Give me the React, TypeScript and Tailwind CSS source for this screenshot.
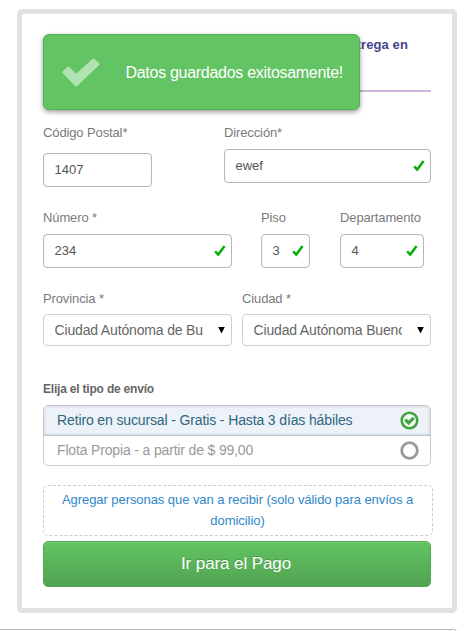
import type { ReactNode } from "react";

function Label({ children, className = "" }: { children: ReactNode; className?: string }) {
  return (
    <div className={`h-4 whitespace-nowrap text-[13px] leading-4 tracking-[-0.12px] text-[#7a7a7e] ${className}`}>{children}</div>
  );
}

function Tick() {
  return (
    <svg width="12" height="12" viewBox="0 0 12 12" className="shrink-0">
      <path d="M1.2 6.4 L4.2 9.6 L10.6 1" fill="none" stroke="#0aab0a" strokeWidth="2.5" />
    </svg>
  );
}

function Field({ value, valid, className }: { value: string; valid?: boolean; className: string }) {
  return (
    <div className={`flex items-center justify-between rounded-[4px] border border-[#b8b8b8] bg-white pr-[5px] pl-[10.5px] shadow-[inset_0_0_1px_#ccc] ${className}`}>
      <span className="text-[13px] leading-4 text-[#555]">{value}</span>
      {valid && <Tick />}
    </div>
  );
}

function Select({ value }: { value: string }) {
  return (
    <div className="flex h-8 w-[189px] items-center justify-between rounded-[4px] border border-[#cfcfcf] bg-white pr-[6px] pl-[10.5px]">
      <span className="w-[148px] overflow-hidden text-[14px] leading-5 tracking-[-0.16px] whitespace-nowrap text-[#666]">{value}</span>
      <svg width="7" height="7" viewBox="0 0 7 7">
        <path d="M0.2 0 H6.8 L3.5 6.5 Z" fill="#000" />
      </svg>
    </div>
  );
}

export default function App() {
  return (
    <div className="h-[631px] w-[475px] overflow-hidden bg-white pt-[9px] font-['Liberation_Sans',Arial,sans-serif]">
      <main className="relative ml-[17px] h-[604px] w-[440px] rounded-[5px] border-[5px] border-[#e0e1e3] px-[21px]">
        <header className="mt-[21px] flex h-[57px] justify-end border-b-2 border-[#cdb4d8] pr-[23px] text-[13px] leading-[19px] font-bold tracking-[0.1px] text-[#45438f]">
          entrega en
        </header>

        <div role="status" className="absolute top-[20px] left-[21px] flex h-[76px] w-[317px] items-center rounded-[6px] border border-[#55b155] bg-[#62c462] pl-[18px] shadow-[0_2px_5px_rgba(0,0,0,0.4)]">
          <svg width="38" height="29" viewBox="0 0 38 29">
            <path d="M0.8 15.2 Q-0.1 14.2 0.8 13.3 L5.2 9 Q6.2 8.1 7.2 9 L14.2 15.8 L30.5 0.9 Q31.6 0 32.6 0.9 L36.9 5.1 Q37.9 6.2 36.9 7.2 L15.3 28 Q14.2 29 13.1 28 Z" fill="#b1e2b1" />
          </svg>
          <span className="ml-[25.5px] pt-[1px] text-[16px] leading-5 tracking-[-0.29px] whitespace-nowrap text-white">Datos guardados exitosamente!</span>
        </div>

        <div className="mt-[33px] flex">
          <div className="w-[181px]">
            <Label>Código Postal*</Label>
            <Field value="1407" className="mt-[12px] h-[34px] w-[109px]" />
          </div>
          <div>
            <Label>Dirección*</Label>
            <Field value="ewef" valid className="mt-[8px] h-[34px] w-[207px]" />
          </div>
        </div>

        <div className="mt-[23px] flex">
          <div className="w-[218px]">
            <Label>Número *</Label>
            <Field value="234" valid className="mt-[8px] h-[34px] w-[189px]" />
          </div>
          <div className="w-[79px]">
            <Label>Piso</Label>
            <Field value="3" valid className="mt-[8px] h-[34px] w-[49px]" />
          </div>
          <div>
            <Label>Departamento</Label>
            <Field value="4" valid className="mt-[8px] h-[34px] w-[84px]" />
          </div>
        </div>

        <div className="mt-[23px] flex gap-[10px]">
          <div>
            <Label className="mb-[7px]">Provincia *</Label>
            <Select value="Ciudad Autónoma de Bu" />
          </div>
          <div>
            <Label className="mb-[7px]">Ciudad *</Label>
            <Select value="Ciudad Autónoma Bueno" />
          </div>
        </div>

        <h2 className="mt-[35px] h-4 text-[12px] leading-4 font-bold tracking-[-0.2px] text-[#666]">Elija el tipo de envío</h2>
        <div className="mt-[8px] h-[61px] w-[388px] overflow-hidden rounded-[5px] border border-[#c9cbcd]">
          <div className="flex h-[30px] items-center justify-between border-b border-[#b4cadb] bg-[#ecf2f7] pr-[11px] pl-[13px] shadow-[inset_0_0_3px_#b9c4cd]">
            <span className="pb-[1px] text-[14px] leading-5 tracking-[-0.13px] whitespace-nowrap text-[#2f6682]">Retiro en sucursal - Gratis - Hasta 3 días hábiles</span>
            <svg width="19" height="19" viewBox="0 0 19 19">
              <circle cx="9.5" cy="9.5" r="7.8" fill="#f5faf5" stroke="#43a443" strokeWidth="2.6" />
              <path d="M5.3 8.7 L8.6 11.9 L13.7 6.9" fill="none" stroke="#43a443" strokeWidth="3.2" />
            </svg>
          </div>
          <div className="flex h-[29px] items-center justify-between pr-[11px] pl-[13px]">
            <span className="pb-[1px] text-[14px] leading-5 tracking-[-0.16px] whitespace-nowrap text-[#999]">Flota Propia - a partir de $ 99,00</span>
            <svg width="19" height="19" viewBox="0 0 19 19">
              <circle cx="9.5" cy="9.5" r="7.8" fill="none" stroke="#999" strokeWidth="2.8" />
            </svg>
          </div>
        </div>

        <a className="mt-[19px] flex h-[51px] w-[390px] flex-col items-center justify-center rounded-[5px] border border-dashed border-[#bdd0e0] pb-[2px] text-[13px] leading-[21px] tracking-[-0.06px] whitespace-nowrap text-[#3087c7]">
          <span className="pr-px">Agregar personas que van a recibir (solo válido para envíos a</span>
          <span className="pr-px">domicilio)</span>
        </a>

        <button className="mt-[5px] block h-[46px] w-[388px] rounded-[5px] border border-[#53a653] bg-linear-to-b from-[#62c462] to-[#51a351] pr-[2px] pb-[1px] text-[17px] leading-6 tracking-[-0.1px] text-white shadow-[inset_0_1px_0_#76ca76] [text-shadow:0_-1px_0_rgba(0,0,0,0.2)]">
          Ir para el Pago
        </button>
      </main>
      <div className="mt-[16px] h-[10px] w-[457px] rounded-tr-[4px] border-t border-r border-[#b8b8b8]" />
    </div>
  );
}
